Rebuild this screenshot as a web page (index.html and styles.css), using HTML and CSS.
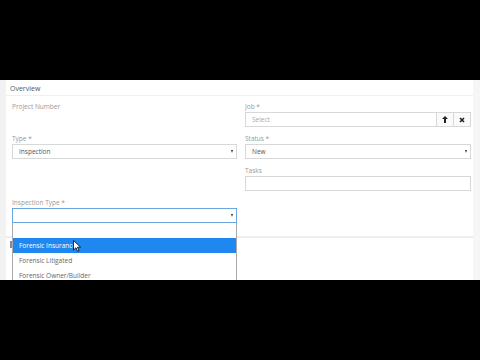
FILE: index.html
```html
<!DOCTYPE html>
<html lang="en">
<head>
    <meta charset="UTF-8">
    <title>Overview</title>
    <link rel="stylesheet" href="styles.css">
</head>
<body>
    <div class="screen">
        <div class="panel">
            <div class="panel-heading">Overview</div>
            <div class="panel-body">
                <div class="field">
                    <label>Project Number</label>
                </div>
                <div class="field">
                    <label>Job *</label>
                    <div class="input-group">
                        <div class="control placeholder">Select</div>
                        <span class="addon">
                            <svg width="6" height="7" viewBox="0 0 6 7"><path d="M3 0L6 3H4V7H2V3H0Z" fill="#222"/></svg>
                        </span>
                        <span class="addon">
                            <svg width="6" height="6" viewBox="0 0 6 6"><path d="M1 1L5 5M5 1L1 5" stroke="#222" stroke-width="1.6"/></svg>
                        </span>
                    </div>
                </div>
                <div class="field">
                    <label>Type *</label>
                    <div class="control select">Inspection</div>
                </div>
                <div class="field">
                    <label>Status *</label>
                    <div class="control select">New</div>
                </div>
                <div class="field"></div>
                <div class="field">
                    <label>Tasks</label>
                    <div class="control"></div>
                </div>
                <div class="field dropdown-wrap">
                    <label>Inspection Type *</label>
                    <div class="control select focused"></div>
                    <ul class="dropdown">
                        <li></li>
                        <li class="active">Forensic Insurance</li>
                        <li>Forensic Litigated</li>
                        <li>Forensic Owner/Builder</li>
                    </ul>
                    <svg class="cursor" width="8" height="12" viewBox="0 0 8 12"><path d="M0.5 0.5V10L3 7.7L4.6 11.3L6 10.7L4.5 7.2H7.6Z" fill="#fff" stroke="#000" stroke-width="0.8"/></svg>
                </div>
            </div>
        </div>
        <div class="after">
            <span class="stub"></span>
        </div>
    </div>
</body>
</html>
```

FILE: styles.css
```css
* {
    box-sizing: border-box;
}
body {
    margin: 0;
    background: #000;
    font-family: "Open Sans", sans-serif;
    font-size: 6.5px;
    color: #999;
}
.screen {
    margin-top: 80px;
    height: 200px;
    background: #fff;
    overflow: hidden;
    border-left: 6px solid #f2f2f2;
    border-right: 7px solid #f6f6f6;
}
.panel {
    border-bottom: 2px solid #eeeeee;
}
.panel-heading {
    height: 16px;
    padding: 4px 4px 0;
    color: #555;
    font-size: 7px;
    border-bottom: 1px solid #f0f0f0;
}
.panel-body {
    display: grid;
    grid-template-columns: 225px 226px;
    column-gap: 8px;
    row-gap: 7px;
    padding: 6px 0 13px 6px;
}
.field {
    height: 25px;
    position: relative;
}
label {
    display: block;
    height: 10px;
    line-height: 10px;
}
.control {
    height: 15px;
    line-height: 13px;
    border: 1px solid #d8d8d8;
    padding: 0 6px;
    color: #555;
    background: #fff;
}
.placeholder {
    color: #aaa;
    flex: 1;
}
.select {
    position: relative;
}
.select::after {
    content: "";
    position: absolute;
    right: 3px;
    top: 5px;
    border-left: 1.5px solid transparent;
    border-right: 1.5px solid transparent;
    border-top: 3px solid #333;
}
.focused {
    border-color: #6aa6e0;
}
.input-group {
    display: flex;
}
.addon {
    width: 17px;
    height: 15px;
    border: 1px solid #d8d8d8;
    border-left: none;
    display: flex;
    align-items: center;
    justify-content: center;
    background: #fafafa;
}
.dropdown {
    position: absolute;
    top: 25px;
    left: 0;
    width: 225px;
    margin: 0;
    padding: 0;
    list-style: none;
    background: #fff;
    border: 1px solid #aaa;
    border-top: none;
    z-index: 2;
}
.dropdown li {
    height: 15px;
    line-height: 15px;
    padding: 0 6px;
    color: #666;
}
.dropdown li.active {
    background: #1e88f0;
    color: #fff;
}
.cursor {
    position: absolute;
    top: 42px;
    left: 61px;
    z-index: 3;
}
.after {
    padding: 3px 4px;
}
.stub {
    display: block;
    width: 2px;
    height: 7px;
    background: #888;
}
```
